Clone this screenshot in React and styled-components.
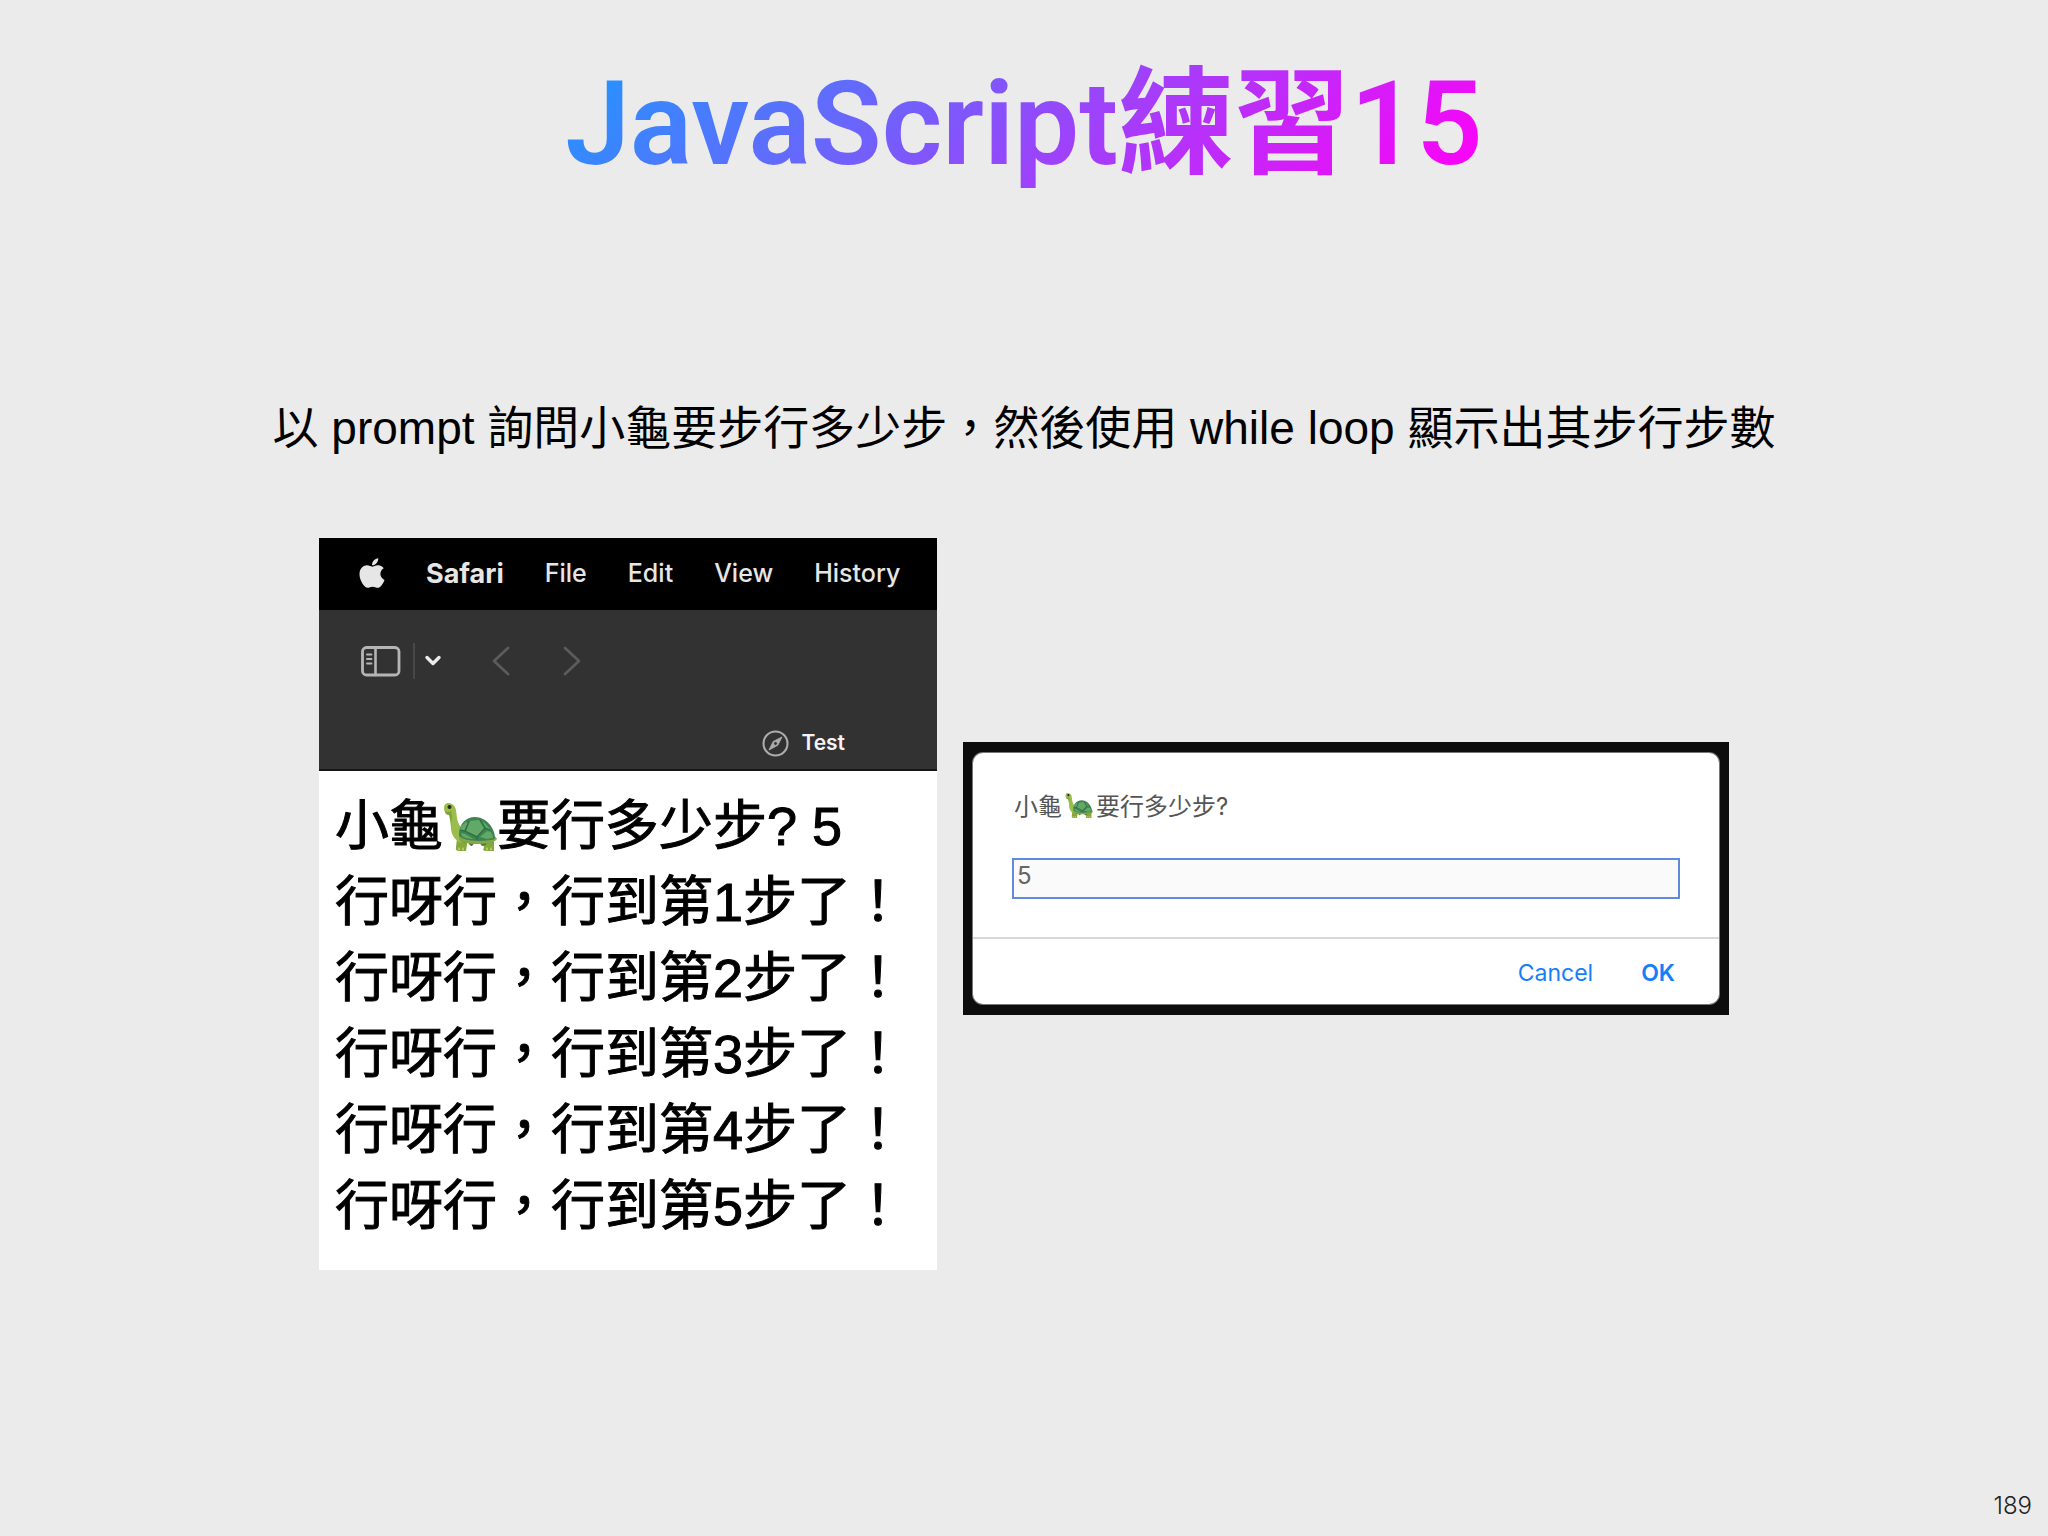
import React, { useState } from "react";
import styled, { createGlobalStyle } from "styled-components";
import { FaApple } from "react-icons/fa";

const system = `Inter, "Noto Sans CJK TC", sans-serif`;
const display = `Roboto, "Noto Sans CJK TC", sans-serif`;
const helvetica = `"Liberation Sans", "Noto Sans CJK TC", sans-serif`;

const GlobalStyle = createGlobalStyle`
  * { box-sizing: border-box; }
  body { margin: 0; background: #ebebeb; }
  button { border: 0; padding: 0; background: none; color: inherit; font: inherit; cursor: pointer; }
  svg { display: block; }
`;

const Slide = styled.div`
  min-height: 100vh;
  display: flex;
  flex-direction: column;
  align-items: center;
  padding-top: 52px;
  background: #ebebeb;
  color: #000;
  font-family: ${helvetica};
`;

const Title = styled.h1`
  margin: 0;
  font: 600 116px/144px ${display};
  background: linear-gradient(135deg, #1e98ff 1%, #ff00f7 98%);
  background-clip: text;
  -webkit-background-clip: text;
  color: transparent;
`;

const Brief = styled.p`
  margin: 196px 0 0;
  font-size: 46px;
  line-height: 72px;
  text-align: center;
`;

const Figures = styled.main`
  display: flex;
  align-items: center;
  justify-content: center;
  gap: 26px;
  margin-top: 74px;
`;

const Browser = styled.section`
  width: 618px;
  background: #fff;
`;

const MenuBar = styled.nav`
  display: flex;
  align-items: center;
  gap: 41px;
  height: 72px;
  padding: 0 0 2px 40px;
  background: #000;
  color: #e6e6e6;
  font-family: ${system};
  font-size: 25px;
`;

const MenuItem = styled.button`
  font-size: ${(p) => (p.$strong ? 27 : 25)}px;
  font-weight: ${(p) => (p.$strong ? 700 : 500)};
`;

const AppleMark = styled(FaApple)`
  width: 26px;
  height: 34px;
`;

const Chrome = styled.div`
  height: 161px;
  padding: 32px 0 0 42px;
  background: #323232;
  border-bottom: 2px solid #141414;
`;

const Toolbar = styled.div`
  display: flex;
  align-items: center;
  height: 38px;
`;

const ToolButton = styled.button`
  margin-left: ${(p) => p.$space || 0}px;
  color: ${(p) => p.$tone};
`;

const Separator = styled.span`
  width: 2px;
  height: 36px;
  margin-left: 12px;
  background: #484848;
`;

const Tab = styled.div`
  display: flex;
  align-items: center;
  justify-content: flex-end;
  gap: 12px;
  margin-top: 48px;
  padding-right: 92px;
  height: 30px;
  color: #f4f4f4;
  font: 600 21px/30px ${system};
`;

const Output = styled.div`
  padding: 17px 16px 26px;
  font-size: 54px;
  line-height: 76px;
  -webkit-text-stroke: 1px #000;
`;

const Line = styled.p`
  display: flex;
  margin: 0;
  white-space: pre;
`;

const Turtle = styled.svg`
  flex: none;
  align-self: center;
  width: ${(p) => p.$size}px;
  height: ${(p) => p.$size}px;
  margin: 0 ${(p) => p.$space || 0}px;
`;

const Backdrop = styled.section`
  width: 766px;
  margin-bottom: 52px;
  padding: 11px 10px;
  background: #0d0d0d;
`;

const Dialog = styled.form`
  overflow: hidden;
  border-radius: 10px;
  background: #fff;
  box-shadow: 0 0 0 1px #777;
  font-family: ${system};
`;

const Field = styled.div`
  padding: 34px 39px 38px;
`;

const Question = styled.label`
  display: flex;
  align-items: center;
  height: 36px;
  padding-left: 2px;
  color: #555;
  font-size: 24px;
`;

const Answer = styled.input`
  display: block;
  width: 100%;
  height: 41px;
  margin-top: 35px;
  padding: 0 3px 6px;
  border: 2px solid #5f8ade;
  border-radius: 0;
  outline: 0;
  background: #fafafa;
  color: #666;
  font: 400 24px/30px ${system};
`;

const Actions = styled.div`
  display: flex;
  align-items: center;
  justify-content: flex-end;
  gap: 48px;
  height: 67px;
  padding: 3px 44px 0 0;
  border-top: 2px solid #d8d8d8;
`;

const Action = styled.button`
  color: #157efb;
  font-size: 23px;
  font-weight: ${(p) => (p.$strong ? 600 : 400)};
`;

const PageNumber = styled.footer`
  align-self: flex-end;
  margin-top: auto;
  padding: 0 16px 15px;
  color: #222;
  font: 300 24px/30px ${system};
`;

function TurtleIcon({ size, space }) {
  return (
    <Turtle $size={size} $space={space} viewBox="0 0 54 54" role="img" aria-label="🐢">
      <path d="M15 31 13 48q-1 4 3 4h7l2-13z" fill="#84a93a" />
      <path d="M39 39 41 49q-3 3 3 3h7V37z" fill="#84a93a" />
      <path d="M25 42q1 5 4 5l4-5zM35 42l4 5 4-1 1-5z" fill="#4c792f" />
      <path d="M1 9C1 4 5 3 9 5c5 3 4 9 5 14 1 6 5 11 8 16l-4 9c-7-3-11-10-10-19 1-6 0-10-3-11-3 0-4-2-4-5z" fill="#9bbd4c" />
      <path d="M2 12q3 2 6 0l1 5q0 5-1 11-1-9-2-12-4 0-4-4z" fill="#7fa23a" />
      <circle cx="6.5" cy="8" r="2" fill="#222d17" />
      <path d="M48 38q5-2 6 2-1 2-6 3z" fill="#91b347" />
      <path d="M16 35c0-10 7-17 16-17 11 0 20 11 20 21 0 3-2 5-5 5-13 1-24 1-29-2-2-1-2-4-2-7z" fill="#3d8450" />
      <path d="m27 22 9-1 5 8-7 8-11-5zM18 27l5-4 2 1-4 8-4-1zM39 22q6 4 8 9l-4-2zM44 32l4 1q2 4 2 6l-6 1-7-2zM18 34l4 1 9 5q-9 0-12-3z" fill="#62a866" />
      <path d="m26 22-4 10 12 6 8-9-5-8M22 32l-5-1M34 38v3M42 29l5 2" fill="none" stroke="#286744" />
      <path d="M16 37q8 7 32 4 3 0 4-2 0 5-5 5-22 3-31-3z" fill="#86a748" />
      <path d="M16 51v-2M20 51v-2M44 51v-2M48 51v-2" stroke="#dce398" strokeLinecap="round" />
    </Turtle>
  );
}

function SidebarIcon() {
  return (
    <svg width="40" height="31" viewBox="0 0 40 31" fill="none" stroke="#b5b5b5" strokeLinecap="round">
      <rect x="1.5" y="1.5" width="36.5" height="27.5" rx="4" strokeWidth="2.8" />
      <path d="M14.5 2v27" strokeWidth="2.6" />
      <path d="M6 8.5h4.5M6 13h4.5M6 17.5h4.5" strokeWidth="1.9" />
    </svg>
  );
}

function ChevronIcon({ width, height, d, weight }) {
  return (
    <svg width={width} height={height} fill="none" stroke="currentColor" strokeWidth={weight} strokeLinecap="round" strokeLinejoin="round">
      <path d={d} />
    </svg>
  );
}

function CompassIcon() {
  return (
    <svg width="27" height="27" viewBox="0 0 27 27" fill="none" stroke="#adadad">
      <circle cx="13.5" cy="13.5" r="12" strokeWidth="2.1" />
      <path fillRule="evenodd" d="M20 7 15.8 15.2 7 20 11.2 11.5zM13.5 11.6a1.9 1.9 0 1 0 0 3.8 1.9 1.9 0 0 0 0-3.8z" fill="#adadad" strokeWidth=".9" strokeLinejoin="round" />
    </svg>
  );
}

const menus = ["File", "Edit", "View", "History"];
const steps = [1, 2, 3, 4, 5];

export default function App() {
  const [answer, setAnswer] = useState("5");
  return (
    <Slide>
      <GlobalStyle />
      <Title>JavaScript練習15</Title>
      <Brief>以 prompt 詢問小龜要步行多少步，然後使用 while loop 顯示出其步行步數</Brief>
      <Figures>
        <Browser>
          <MenuBar>
            <MenuItem aria-label="Apple"><AppleMark /></MenuItem>
            <MenuItem $strong>Safari</MenuItem>
            {menus.map((name) => <MenuItem key={name}>{name}</MenuItem>)}
          </MenuBar>
          <Chrome>
            <Toolbar>
              <ToolButton aria-label="Sidebar"><SidebarIcon /></ToolButton>
              <Separator />
              <ToolButton $space={9} $tone="#ececec" aria-label="Tab groups">
                <ChevronIcon width={18} height={12} d="M3 2.5 9 8.5 15 2.5" weight={3.4} />
              </ToolButton>
              <ToolButton $space={49} $tone="#5c5c5c" aria-label="Back">
                <ChevronIcon width={20} height={32} d="M17 3 3 16 17 29" weight={2.7} />
              </ToolButton>
              <ToolButton $space={51} $tone="#5c5c5c" aria-label="Forward">
                <ChevronIcon width={20} height={32} d="M3 3 17 16 3 29" weight={2.7} />
              </ToolButton>
            </Toolbar>
            <Tab><CompassIcon />Test</Tab>
          </Chrome>
          <Output>
            <Line>小龜<TurtleIcon size={54} />要行多少步? 5</Line>
            {steps.map((n) => <Line key={n}>行呀行，行到第{n}步了！</Line>)}
          </Output>
        </Browser>
        <Backdrop>
          <Dialog onSubmit={(e) => e.preventDefault()}>
            <Field>
              <Question htmlFor="answer">小龜<TurtleIcon size={28} space={3} />要行多少步?</Question>
              <Answer id="answer" value={answer} onChange={(e) => setAnswer(e.target.value)} />
            </Field>
            <Actions>
              <Action type="button">Cancel</Action>
              <Action type="submit" $strong>OK</Action>
            </Actions>
          </Dialog>
        </Backdrop>
      </Figures>
      <PageNumber>189</PageNumber>
    </Slide>
  );
}
